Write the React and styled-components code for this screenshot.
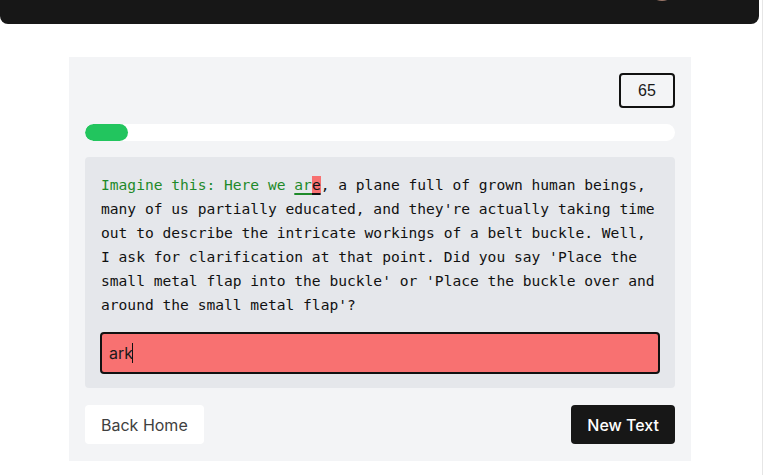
import React from "react";
import styled, { createGlobalStyle } from "styled-components";

const Global = createGlobalStyle`
  html, body { margin: 0; padding: 0; background: #ffffff; }
  body { font-family: Inter, "Liberation Sans", Arial, sans-serif; overflow: hidden; }
  * { box-sizing: border-box; }
`;

const Shell = styled.div`
  width: 763px;
  height: 475px;
  border-right: 1px solid #e6e6e6;
  display: flex;
  flex-direction: column;
  overflow: hidden;
`;

const Header = styled.header`
  height: 24px;
  margin-right: 3px;
  background: #171717;
  border-radius: 0 0 8px 8px;
  position: relative;
  flex-shrink: 0;
`;

const Avatar = styled.div`
  position: absolute;
  left: 648px;
  top: -27px;
  width: 28px;
  height: 28px;
  border-radius: 50%;
  background: radial-gradient(circle at 50% 80%, #b08a7a 0%, #6b4c42 60%, #3a2a25 100%);
`;

const Panel = styled.main`
  width: 622px;
  margin: 33px 0 0 69px;
  background: #f3f4f6;
  padding: 16px 16px 17px;
  display: flex;
  flex-direction: column;
`;

const CounterRow = styled.div`
  display: flex;
  justify-content: flex-end;
`;

const Counter = styled.div`
  width: 56px;
  height: 35px;
  border: 2px solid #111111;
  border-radius: 4px;
  display: flex;
  align-items: center;
  justify-content: center;
  font-family: "Liberation Sans", Arial, sans-serif;
  font-size: 16px;
  color: #1a1a1a;
`;

const Track = styled.div`
  margin-top: 16px;
  height: 17px;
  background: #ffffff;
  border-radius: 9999px;
  overflow: hidden;
`;

const Fill = styled.div`
  height: 100%;
  background: #22c55e;
  border-radius: 9999px;
`;

const TextBox = styled.section`
  margin-top: 16px;
  background: #e5e7eb;
  border-radius: 4px;
  padding: 16px 15px 14px;
`;

const Passage = styled.p`
  margin: 0;
  padding: 0 1px;
  font-family: "DejaVu Sans Mono", "Liberation Mono", monospace;
  font-size: 14.6px;
  line-height: 24px;
  color: #111111;
`;

const Typed = styled.span`
  color: #1e8a2a;
  ${(p) =>
    p.$underline &&
    `text-decoration: underline;
     text-decoration-color: #1e8a2a;
     text-decoration-thickness: 2px;
     text-underline-offset: 3px;`}
`;

const Cursor = styled.span`
  background: #f87171;
  color: #111111;
  text-decoration: underline;
  text-decoration-color: #111111;
  text-decoration-thickness: 2px;
  text-underline-offset: 3px;
`;

const InputWrap = styled.div`
  position: relative;
  margin-top: 15px;
`;

const Input = styled.input`
  display: block;
  width: 100%;
  height: 42px;
  border: 2px solid #111111;
  border-radius: 4px;
  background: #f87171;
  padding: 0 7px;
  font-family: Inter, "Liberation Sans", Arial, sans-serif;
  font-size: 16px;
  color: #1a1a1a;
  outline: none;
  caret-color: transparent;
`;

const Caret = styled.span`
  position: absolute;
  left: 32px;
  top: 11px;
  width: 1px;
  height: 20px;
  background: #111111;
  pointer-events: none;
`;

const Actions = styled.div`
  margin-top: 17px;
  display: flex;
  justify-content: space-between;
`;

const Button = styled.button`
  height: 39px;
  padding: 0 16px;
  border: none;
  border-radius: 4px;
  background: ${(p) => (p.$dark ? "#171717" : "#ffffff")};
  color: ${(p) => (p.$dark ? "#ffffff" : "#404040")};
  font-family: Inter, "Liberation Sans", Arial, sans-serif;
  font-size: 16px;
  font-weight: ${(p) => (p.$dark ? 500 : 400)};
  cursor: pointer;
`;

const rest =
  ", a plane full of grown human beings, many of us partially educated, and they're actually taking time out to describe the intricate workings of a belt buckle. Well, I ask for clarification at that point. Did you say 'Place the small metal flap into the buckle' or 'Place the buckle over and around the small metal flap'?";

export default function App() {
  const progress = 7.3;
  return (
    <>
      <Global />
      <Shell>
        <Header>
          <Avatar />
        </Header>
        <Panel>
          <CounterRow>
            <Counter>65</Counter>
          </CounterRow>
          <Track>
            <Fill style={{ width: `${progress}%` }} />
          </Track>
          <TextBox>
            <Passage>
              <Typed>Imagine this: Here we </Typed>
              <Typed $underline>ar</Typed>
              <Cursor>e</Cursor>
              {rest}
            </Passage>
            <InputWrap>
              <Input defaultValue="ark" />
              <Caret />
            </InputWrap>
          </TextBox>
          <Actions>
            <Button>Back Home</Button>
            <Button $dark>New Text</Button>
          </Actions>
        </Panel>
      </Shell>
    </>
  );
}
